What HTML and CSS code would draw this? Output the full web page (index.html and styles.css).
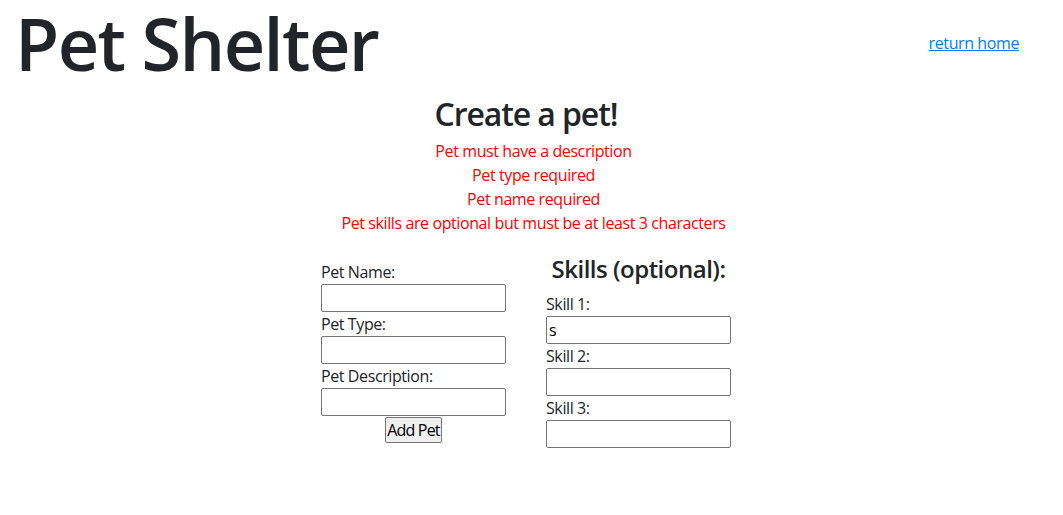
FILE: index.html
```html
<!DOCTYPE html>
<html lang="en">
<head>
<meta charset="utf-8">
<title>Pet Shelter</title>
<link rel="stylesheet" href="styles.css">
</head>
<body>
<header class="top">
  <h1 class="brand">Pet Shelter</h1>
  <a class="home" href="#">return home</a>
</header>
<main class="page">
  <h2 class="title">Create a pet!</h2>
  <div class="errors">
    <p class="err">Pet must have a description</p>
    <p class="err">Pet type required</p>
    <p class="err">Pet name required</p>
    <p class="err">Pet skills are optional but must be at least 3 characters</p>
  </div>
  <form class="form">
    <div class="col">
      <label class="lbl">Pet Name:</label>
      <input class="inp" type="text">
      <label class="lbl">Pet Type:</label>
      <input class="inp" type="text">
      <label class="lbl">Pet Description:</label>
      <input class="inp" type="text">
      <button class="btn" type="button">Add Pet</button>
    </div>
    <div class="col">
      <h4 class="sub">Skills (optional):</h4>
      <label class="lbl">Skill 1:</label>
      <input class="inp" type="text" value="s">
      <label class="lbl">Skill 2:</label>
      <input class="inp" type="text">
      <label class="lbl">Skill 3:</label>
      <input class="inp" type="text">
    </div>
  </form>
</main>
</body>
</html>
```

FILE: styles.css
```css
* { box-sizing: border-box; }
body {
  margin: 0;
  font-family: "Open Sans", "Noto Sans", sans-serif;
  font-size: 16px;
  line-height: 1.5;
  letter-spacing: -0.4px;
  color: #212529;
  background: #fff;
}
.top {
  display: flex;
  justify-content: space-between;
  align-items: center;
  padding: 0 44px 0 15px;
}
.brand {
  margin: 0;
  padding-right: 6px;
  font-size: 72px;
  font-weight: 600;
  letter-spacing: -1.6px;
  line-height: 1.2;
}
.home {
  color: #007bff;
  text-decoration: underline;
}
.page {
  text-align: center;
}
.title {
  margin: 9px 11px 5px 0;
  font-size: 32px;
  font-weight: 600;
  letter-spacing: -1.1px;
  line-height: 1.2;
}
.errors {
  margin: 0 0 20px 4px;
}
.err {
  margin: 0;
  color: #ff0000;
}
.form {
  display: flex;
  justify-content: center;
  align-items: center;
  gap: 40px;
  margin-right: 11px;
}
.col {
  display: flex;
  flex-direction: column;
  align-items: stretch;
  width: 185px;
  text-align: left;
}
.lbl {
  display: block;
  line-height: 24px;
}
.inp {
  height: 28px;
  width: 185px;
  margin: 0;
  padding: 1px 2px;
  border: 1px solid #767676;
  border-radius: 2px;
  font: inherit;
  font-size: 16px;
  color: #000;
}
.btn {
  align-self: center;
  height: 26px;
  margin-top: 1px;
  padding: 0 1px;
  border: 1px solid #767676;
  border-radius: 2px;
  background: #efefef;
  font: inherit;
  font-size: 16px;
  letter-spacing: -0.8px;
  line-height: 22px;
  color: #000;
}
.sub {
  margin: 0 0 8px;
  font-size: 24px;
  font-weight: 600;
  letter-spacing: -0.5px;
  line-height: 1.2;
  text-align: center;
}
```
